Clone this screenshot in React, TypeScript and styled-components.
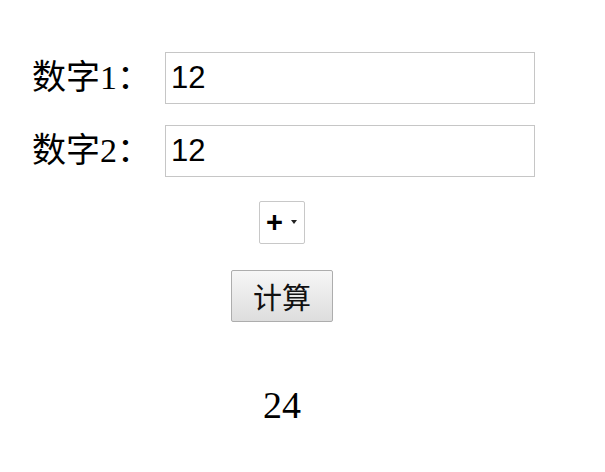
import styled, { createGlobalStyle } from "styled-components"
import { useState } from "react"

const Global = createGlobalStyle`
    body {
        margin: 0;
        background: #fff;
        font-family: "Liberation Serif", "Noto Sans CJK SC", serif;
        color: #000;
    }
`

const Calc = styled.div`
    width: 503px;
    margin-left: 32px;
    padding-top: 52px;
`
const Row = styled.div`
    display: flex;
    align-items: center;
    height: 52px;
    margin-bottom: 21px;
`
const Label = styled.label`
    width: 133px;
    font-size: 34px;
    line-height: 1;
    font-family: "Liberation Serif", "Noto Sans CJK SC", serif;
`
const Field = styled.input`
    box-sizing: border-box;
    width: 370px;
    height: 52px;
    border: 1px solid #c6c6c6;
    padding: 0 5px;
    font-family: "Liberation Sans", Arial, sans-serif;
    font-size: 31px;
    color: #000;
    outline: none;
`
const Center = styled.div`
    display: flex;
    flex-direction: column;
    align-items: center;
`
const SelectBox = styled.div`
    position: relative;
    margin-top: 3px;
    margin-left: -3px;
`
const Op = styled.select`
    appearance: none;
    box-sizing: border-box;
    width: 46px;
    height: 43px;
    border: 1px solid #c8c8c8;
    border-radius: 2px;
    background: #fff;
    padding: 0 0 2px 6px;
    font-family: "Liberation Sans", Arial, sans-serif;
    font-weight: bold;
    font-size: 29px;
    color: #000;
    outline: none;
`
const Arrow = styled.span`
    position: absolute;
    right: 8px;
    top: 19px;
    width: 0;
    height: 0;
    border-left: 3px solid transparent;
    border-right: 3px solid transparent;
    border-top: 4px solid #222;
    pointer-events: none;
`
const Go = styled.button`
    box-sizing: border-box;
    margin-top: 26px;
    margin-left: -3px;
    width: 102px;
    height: 52px;
    border: 1px solid #adadad;
    border-radius: 2px;
    background: linear-gradient(#f6f6f6, #dddddd);
    font-family: "Noto Sans CJK SC", sans-serif;
    font-size: 29px;
    line-height: 1;
    color: #111;
    padding: 0;
`
const Result = styled.div`
    margin-top: 64px;
    margin-left: -3px;
    font-size: 38px;
    line-height: 1;
`

export default function App() {
    const [a, setA] = useState("12")
    const [b, setB] = useState("12")
    const [op, setOp] = useState("+")
    const [res, setRes] = useState("24")

    const run = () => {
        const x = Number(a)
        const y = Number(b)
        const r = op === "+" ? x + y : op === "-" ? x - y : op === "*" ? x * y : x / y
        setRes(String(r))
    }

    return (
        <>
            <Global />
            <Calc>
                <Row>
                    <Label>数字1：</Label>
                    <Field value={a} onChange={e => setA(e.target.value)} />
                </Row>
                <Row>
                    <Label>数字2：</Label>
                    <Field value={b} onChange={e => setB(e.target.value)} />
                </Row>
                <Center>
                    <SelectBox>
                        <Op value={op} onChange={e => setOp(e.target.value)}>
                            <option>+</option>
                            <option>-</option>
                            <option>*</option>
                            <option>/</option>
                        </Op>
                        <Arrow />
                    </SelectBox>
                    <Go onClick={run}>计算</Go>
                    <Result>{res}</Result>
                </Center>
            </Calc>
        </>
    )
}
